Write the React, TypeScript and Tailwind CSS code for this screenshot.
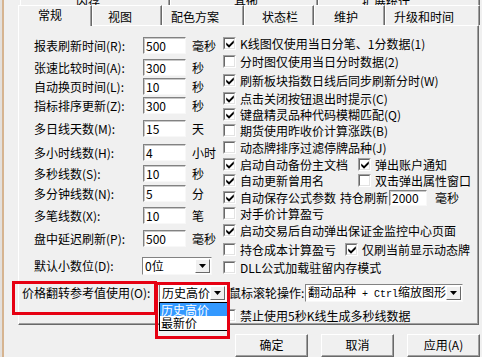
import React from "react";

const font = "font-['Noto_Sans_CJK_SC',sans-serif]";

const leftRows = [
  { label: "报表刷新时间(R):", value: "500", unit: "毫秒", h: "h-[22px]" },
  { label: "张速比较时间(A):", value: "300", unit: "秒", h: "h-[19px]" },
  { label: "自动换页时间(L):", value: "10", unit: "秒", h: "h-[19px]" },
  { label: "指标排序更新(Z):", value: "300", unit: "秒", h: "h-[23px]" },
  { label: "多日线天数(M):", value: "15", unit: "天", h: "h-[24px]" },
  { label: "多小时线数(H):", value: "4", unit: "小时", h: "h-[21px]" },
  { label: "多秒线数(S):", value: "10", unit: "秒", h: "h-[20px]" },
  { label: "多分钟线数(N):", value: "5", unit: "分", h: "h-[22px]" },
  { label: "多笔线数(X):", value: "10", unit: "笔", h: "h-[23px]" },
  { label: "盘中延迟刷新(P):", value: "500", unit: "毫秒", h: "h-[27px]" },
];

type Opt = { on: boolean; text: string; w?: string };

const rightRows: { h: string; items: Opt[]; holdRefresh?: boolean }[] = [
  { h: "h-[18px]", items: [{ on: true, text: "K线图仅使用当日分笔、1分数据(1)" }] },
  { h: "h-[19px]", items: [{ on: false, text: "分时图仅使用当日分时数据(2)" }] },
  { h: "h-[18px]", items: [{ on: true, text: "刷新板块指数日线后同步刷新分时(W)" }] },
  { h: "h-[16px]", items: [{ on: true, text: "点击关闭按钮退出时提示(C)" }] },
  { h: "h-[16px]", items: [{ on: true, text: "键盘精灵品种代码模糊匹配(Q)" }] },
  { h: "h-[17px]", items: [{ on: false, text: "期货使用昨收价计算涨跌(B)" }] },
  { h: "h-[17px]", items: [{ on: false, text: "动态牌排序过滤停牌品种(J)" }] },
  {
    h: "h-[16px]",
    items: [
      { on: true, text: "启动自动备份主文档", w: "w-[135px]" },
      { on: true, text: "弹出账户通知" },
    ],
  },
  {
    h: "h-[17px]",
    items: [
      { on: true, text: "自动更新曾用名", w: "w-[135px]" },
      { on: false, text: "双击弹出属性窗口" },
    ],
  },
  { h: "h-[16px]", items: [{ on: true, text: "自动保存公式参数", w: "w-[117px]" }], holdRefresh: true },
  { h: "h-[17px]", items: [{ on: false, text: "对手价计算盈亏" }] },
  { h: "h-[19px]", items: [{ on: true, text: "启动交易后自动弹出保证金监控中心页面" }] },
  {
    h: "h-[18px]",
    items: [
      { on: false, text: "持仓成本计算盈亏", w: "w-[122px]" },
      { on: true, text: "仅刷当前显示动态牌" },
    ],
  },
  { h: "h-[17px]", items: [{ on: false, text: "DLL公式加载驻留内存模式" }] },
];

const topTabs = [
  { name: "内存", w: "w-[150px]", pl: "pl-[55px]" },
  { name: "其他", w: "w-[148px]", pl: "pl-[63px]" },
  { name: "扩展统计", w: "w-[162px]", pl: "pl-[43px]" },
];

const tabs = [
  { name: "视图", w: "w-[70px]", pl: "pl-[15px]" },
  { name: "配色方案", w: "w-[82px]", pl: "pl-[8px]" },
  { name: "状态栏", w: "w-[70px]", pl: "pl-[17px]" },
  { name: "维护", w: "w-[71px]", pl: "pl-[19px]" },
  { name: "升级和时间", w: "w-[95px]", pl: "pl-[8px]" },
];

function Box({ on }: { on: boolean }) {
  return (
    <span className="flex w-[13px] h-[13px] shrink-0 border border-t-[#a0a0a0] border-l-[#a0a0a0] border-r-white border-b-white">
      <span className="flex flex-1 items-center justify-center bg-white border border-t-[#696969] border-l-[#696969] border-r-[#e3e3e3] border-b-[#e3e3e3]">
        {on && (
          <svg width="8" height="8" viewBox="0 0 7 7.4">
            <path d="M0 2.2 L2.6 4.6 L7 0.2 L7 2.8 L2.6 7.2 L0 4.6 Z" fill="#000" />
          </svg>
        )}
      </span>
    </span>
  );
}

function Field({ value, w, h }: { value: string; w: string; h: string }) {
  return (
    <div
      className={`${w} ${h} shrink-0 flex items-center pl-[2px] bg-white border border-t-[#828282] border-l-[#828282] border-r-[#f8f8f8] border-b-[#f8f8f8] shadow-[inset_1px_1px_0_#c8c8c8]`}
    >
      {value}
    </div>
  );
}

function Combo({ children, w }: { children: React.ReactNode; w: string }) {
  return (
    <div
      className={`${w} h-[18px] shrink-0 flex items-center bg-white border border-t-[#828282] border-l-[#828282] border-r-[#f8f8f8] border-b-[#f8f8f8]`}
    >
      <span className="flex-1 pl-[2px] whitespace-pre">{children}</span>
      <span className="w-[15px] h-[14px] mr-[1px] shrink-0 flex items-center justify-center bg-[#f0f0f0] border border-t-white border-l-white border-r-[#696969] border-b-[#696969]">
        <svg width="7" height="4" viewBox="0 0 7 4">
          <path d="M0 0 H7 L3.5 4 Z" fill="#000" />
        </svg>
      </span>
    </div>
  );
}

function Check({ on, text, w }: Opt) {
  return (
    <div className={`flex shrink-0 items-center gap-[4px] whitespace-nowrap ${w ?? ""}`}>
      <Box on={on} />
      <span>{text}</span>
    </div>
  );
}

export default function App() {
  return (
    <div
      className={`relative w-[482px] h-[357px] overflow-hidden flex bg-[#f0f0f0] text-black text-[12px] leading-[14px] ${font}`}
    >
      <div className="w-[2px] bg-[#e4e0dc]" />
      <div className="w-[2px] bg-[#d6b490]" />

      <div className="flex-1 flex flex-col">
        {/* back tab row, cut off by the window edge */}
        <div className="h-[8px] overflow-hidden">
          <div className="flex h-[20px] -mt-[12px] pl-[16px]">
            {topTabs.map((t) => (
              <div
                key={t.name}
                className={`${t.w} ${t.pl} pt-[7px] flex items-center border-l border-l-white border-r border-r-[#696969] shadow-[inset_-1px_0_0_#a0a0a0]`}
              >
                {t.name}
              </div>
            ))}
          </div>
        </div>

        {/* front tab row */}
        <div className="flex items-start h-[20px] pl-[14px]">
          <div className="relative z-10 w-[74px] h-[21px] pl-[19px] pb-[3px] flex items-center bg-[#f0f0f0] border-t border-t-white border-l border-l-white border-r border-r-[#696969] shadow-[inset_-1px_0_0_#a0a0a0]">
            常规
          </div>
          {tabs.map((t) => (
            <div
              key={t.name}
              className={`${t.w} ${t.pl} h-[20px] pt-[2px] flex items-center border-t border-t-white border-l border-l-white border-r border-r-[#696969] shadow-[inset_-1px_0_0_#a0a0a0]`}
            >
              {t.name}
            </div>
          ))}
        </div>

        {/* page */}
        <div className="relative ml-[14px] w-[461px] h-[303px] border border-t-white border-l-white border-r-[#696969] border-b-[#696969] shadow-[inset_-1px_-1px_0_#a0a0a0]">
          <div className="flex">
            <div className="w-[204px] shrink-0 pl-[15px] pt-[11px]">
              {leftRows.map((r) => (
                <div key={r.label} className={r.h}>
                  <div className="flex items-center h-[17px]">
                    <span className="w-[109px] shrink-0 whitespace-nowrap">{r.label}</span>
                    <Field value={r.value} w="w-[43px]" h="h-[17px]" />
                    <span className="ml-[6px] whitespace-nowrap">{r.unit}</span>
                  </div>
                </div>
              ))}
              <div className="flex items-center h-[18px]">
                <span className="w-[108px] shrink-0 whitespace-nowrap">默认小数位(D):</span>
                <Combo w="w-[70px]">0位</Combo>
              </div>
            </div>

            <div className="flex-1 pt-[9px]">
              {rightRows.map((r, i) => (
                <div key={i} className={r.h}>
                  <div className="flex items-center h-[17px]">
                    {r.items.map((it) => (
                      <Check key={it.text} {...it} />
                    ))}
                    {r.holdRefresh && (
                      <>
                        <span className="shrink-0 whitespace-nowrap">持仓刷新</span>
                        <div className="ml-[1px]">
                          <Field value="2000" w="w-[38px]" h="h-[16px]" />
                        </div>
                        <span className="ml-[8px] shrink-0">毫秒</span>
                      </>
                    )}
                  </div>
                </div>
              ))}
            </div>
          </div>

          <div className="flex items-center h-[18px] mt-[8px] pl-[3px]">
            <span className="w-[137px] shrink-0 whitespace-nowrap">价格翻转参考值使用(O):</span>
            <Combo w="w-[68px]">历史高价</Combo>
            <span className="ml-[2px] w-[76px] shrink-0 whitespace-nowrap">鼠标滚轮操作:</span>
            <Combo w="w-[158px]">
              翻动品种
              <span className="font-['Liberation_Mono',monospace] text-[10px]"> + Ctrl</span>
              缩放图形
            </Combo>
          </div>

          <div className="flex items-center h-[17px] mt-[5px] pl-[204px]">
            <Check on={false} text="禁止使用5秒K线生成多秒线数据" />
          </div>

          {/* open drop-down list */}
          <div className="absolute left-[140px] top-[276px] w-[69px] h-[29px] bg-white border border-black flex flex-col">
            <div className="h-[13px] leading-[13px] bg-[#3399ff] text-white pl-[1px]">历史高价</div>
            <div className="h-[14px] leading-[14px] pl-[1px]">最新价</div>
          </div>
        </div>

        {/* dialog buttons */}
        <div className="flex gap-[13px] pl-[231px] mt-[9px]">
          {["确定", "取消", "应用(A)"].map((b) => (
            <div
              key={b}
              className="w-[73px] h-[23px] shrink-0 pb-[2px] flex items-center justify-center border border-t-white border-l-white border-r-[#696969] border-b-[#696969] shadow-[inset_-1px_-1px_0_#a0a0a0]"
            >
              {b}
            </div>
          ))}
        </div>
      </div>

      {/* red annotation frames */}
      <div className="absolute left-[12px] top-[281px] w-[145px] h-[34px] border-[3px] border-[#e60012]" />
      <div className="absolute left-[155px] top-[282px] w-[75px] h-[57px] border-[3px] border-[#e60012]" />
    </div>
  );
}
